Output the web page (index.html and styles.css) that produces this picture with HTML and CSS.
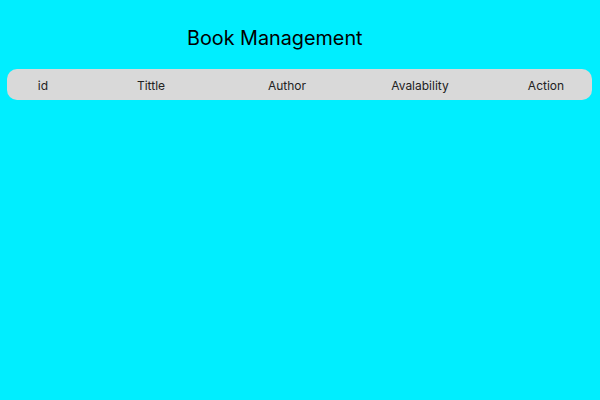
FILE: index.html
```html
<!DOCTYPE html>
<html>
<head>
<meta charset="utf-8">
<link rel="stylesheet" href="styles.css">
</head>
<body>
<div class="page">
  <h1 class="title">Book Management</h1>
  <div class="table-head">
    <div class="cell">id</div>
    <div class="cell">Tittle</div>
    <div class="cell">Author</div>
    <div class="cell">Avalability</div>
    <div class="cell last">Action</div>
  </div>
</div>
</body>
</html>
```
FILE: styles.css
```css
html, body {
  margin: 0;
  padding: 0;
  background: #00eeff;
  font-family: Inter, "Noto Sans", sans-serif;
  color: #111;
}
.page {
  width: 600px;
  height: 400px;
  padding: 26px 8px 0 7px;
  box-sizing: border-box;
}
.title {
  margin: 0 0 19px 180px;
  font-size: 19.8px;
  font-weight: 400;
  line-height: 24px;
  color: #000;
}
.table-head {
  display: grid;
  grid-template-columns: 72px 144px 128px 138px 1fr;
  align-items: center;
  height: 31px;
  padding-top: 2px;
  box-sizing: border-box;
  background: #d9d9d9;
  border-radius: 10px;
  font-size: 12px;
  color: #222;
}
.cell {
  text-align: center;
}
.cell.last {
  padding-left: 11px;
}
```
